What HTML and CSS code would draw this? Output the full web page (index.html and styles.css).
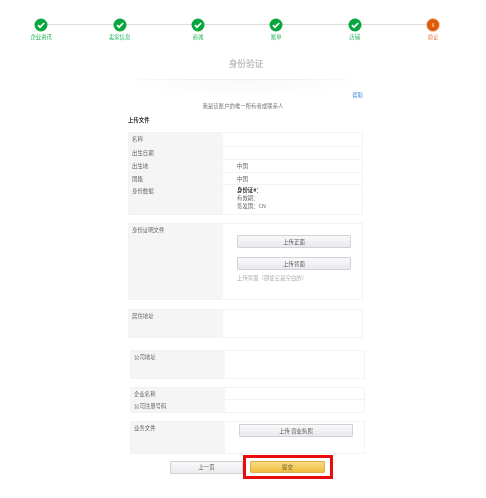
FILE: index.html
```html
<!DOCTYPE html>
<html lang="zh">
<head>
<meta charset="utf-8">
<title>身份验证</title>
<link rel="stylesheet" href="styles.css">
</head>
<body>
<div class="page">
  <ol class="steps">
    <li class="step"><svg class="dot" viewBox="0 0 14 14"><circle cx="7" cy="7" r="6.5" fill="#07a63f"/><path d="M3.9 7.2 6 9.2 10.2 5" fill="none" stroke="#fff" stroke-width="1.7"/></svg><span>企业资讯</span></li>
    <li class="step"><svg class="dot" viewBox="0 0 14 14"><circle cx="7" cy="7" r="6.5" fill="#07a63f"/><path d="M3.9 7.2 6 9.2 10.2 5" fill="none" stroke="#fff" stroke-width="1.7"/></svg><span>卖家信息</span></li>
    <li class="step"><svg class="dot" viewBox="0 0 14 14"><circle cx="7" cy="7" r="6.5" fill="#07a63f"/><path d="M3.9 7.2 6 9.2 10.2 5" fill="none" stroke="#fff" stroke-width="1.7"/></svg><span>商城</span></li>
    <li class="step"><svg class="dot" viewBox="0 0 14 14"><circle cx="7" cy="7" r="6.5" fill="#07a63f"/><path d="M3.9 7.2 6 9.2 10.2 5" fill="none" stroke="#fff" stroke-width="1.7"/></svg><span>账单</span></li>
    <li class="step"><svg class="dot" viewBox="0 0 14 14"><circle cx="7" cy="7" r="6.5" fill="#07a63f"/><path d="M3.9 7.2 6 9.2 10.2 5" fill="none" stroke="#fff" stroke-width="1.7"/></svg><span>店铺</span></li>
    <li class="step current"><span class="num">6</span><span>验证</span></li>
  </ol>

  <h1 class="title">身份验证</h1>
  <div class="rule"></div>
  <a class="help">帮助</a>
  <p class="sub">我是该账户的唯一所有者或联系人</p>
  <h2 class="heading">上传文件</h2>

  <div class="panel p-identity">
    <div class="row h14"><div class="lab">名称</div><div class="val"></div></div>
    <div class="row h13"><div class="lab">出生日期</div><div class="val"></div></div>
    <div class="row h13"><div class="lab">出生地</div><div class="val">中国</div></div>
    <div class="row h13"><div class="lab">国籍</div><div class="val">中国</div></div>
    <div class="row h29"><div class="lab">身份数据</div><div class="val lines"><span class="strong">身份证#：</span><span>有效期：</span><span>签发国：CN</span></div></div>
  </div>

  <div class="panel p-doc">
    <div class="row fill"><div class="lab">身份证明文件</div>
      <div class="val stack">
        <button class="btn">上传正面</button>
        <button class="btn">上传背面</button>
        <span class="note">上传背面（即使它是空白的）</span>
      </div>
    </div>
  </div>

  <div class="panel p-home">
    <div class="row fill"><div class="lab">居住地址</div><div class="val"></div></div>
  </div>

  <div class="panel shift p-co">
    <div class="row fill"><div class="lab">公司地址</div><div class="val"></div></div>
  </div>

  <div class="panel shift p-name">
    <div class="row h13"><div class="lab">企业名称</div><div class="val"></div></div>
    <div class="row h13"><div class="lab">公司注册号码</div><div class="val"></div></div>
  </div>

  <div class="panel shift p-biz">
    <div class="row fill"><div class="lab">业务文件</div>
      <div class="val stack tight"><button class="btn">上传 营业执照</button></div>
    </div>
  </div>

  <div class="actions">
    <button class="btn prev">上一页</button>
    <div class="mark"><button class="btn submit">提交</button></div>
  </div>
</div>
</body>
</html>
```
FILE: styles.css
```css
* { box-sizing: border-box; }
html, body { margin: 0; background: #fff; }
body { font-family: "Noto Sans CJK SC", "Liberation Sans", sans-serif; }
.page {
  width: 486px;
  height: 498px;
  overflow: hidden;
  padding-top: 18px;
  color: #444;
  font-size: 5.4px;
  line-height: 8px;
  filter: blur(0.55px);
}
.steps {
  position: relative;
  list-style: none;
  display: grid;
  grid-template-columns: repeat(6, 78.4px);
  margin: 0 0 0 2px;
  padding: 0;
  height: 27px;
}
.steps::before {
  content: "";
  position: absolute;
  left: 39px;
  width: 392px;
  top: 6px;
  height: 1.4px;
  background: #dcdcdc;
}
.step {
  position: relative;
  display: flex;
  flex-direction: column;
  align-items: center;
  gap: 1px;
  color: #1fb356;
}
.dot { width: 14px; height: 14px; display: block; }
.num {
  width: 14px;
  height: 14px;
  border-radius: 50%;
  background: #dc5a08;
  border: 1px solid #f6c9a8;
  color: #fff;
  font-size: 4.5px;
  line-height: 12px;
  text-align: center;
}
.current { color: #e57a3a; }
.title {
  margin: 12px 0 0;
  padding-left: 6px;
  height: 14px;
  font-size: 8.7px;
  line-height: 14px;
  font-weight: 400;
  text-align: center;
  color: #a4a4a4;
}
.rule {
  width: 240px;
  height: 20px;
  margin: 8px auto 0;
  background: linear-gradient(to right, transparent, #efefef 30%, #efefef 70%, transparent) top / 100% 1px no-repeat,
    radial-gradient(ellipse at top, #f8f8f8, transparent 70%);
}
.help {
  display: block;
  height: 8px;
  margin-top: -8px;
  padding-right: 123px;
  text-align: right;
  color: #4a90d9;
}
.sub {
  margin: 3px 0 0;
  text-align: center;
  color: #777;
}
.heading {
  margin: 6px 0 0 128px;
  font-size: 5.4px;
  line-height: 8px;
  font-weight: 700;
  color: #333;
}
.panel {
  width: 235px;
  margin-left: 128px;
  border: 1px solid #f3f3f3;
  display: flex;
  flex-direction: column;
}
.panel.shift { margin-left: 130px; }
.p-identity { margin-top: 8px; height: 83px; }
.p-doc { margin-top: 8px; height: 77px; }
.p-home { margin-top: 9px; height: 29px; }
.p-co { margin-top: 12px; height: 29px; }
.p-name { margin-top: 8px; height: 26px; }
.p-biz { margin-top: 8px; height: 33px; }
.row {
  display: grid;
  grid-template-columns: 94px 1fr;
  border-bottom: 1px solid #f3f3f3;
}
.row:last-child { border-bottom: 0; }
.h13 { height: 13px; }
.h14 { height: 14px; }
.h29 { height: 29px; }
.fill { flex: 1; }
.lab {
  background: #f5f5f5;
  padding: 2px 0 0 3px;
  color: #666;
}
.val { padding: 2px 0 0 14px; color: #666; }
.lines { display: flex; flex-direction: column; padding-top: 1px; line-height: 8px; }
.strong { color: #333; font-weight: 700; }
.stack {
  display: flex;
  flex-direction: column;
  align-items: flex-start;
  gap: 9px;
  padding-top: 11px;
}
.stack.tight { padding-top: 2px; }
.btn {
  display: block;
  width: 114px;
  height: 13px;
  padding: 0;
  border: 1px solid #cfd2d7;
  border-radius: 1px;
  background: linear-gradient(#f9f9fa, #e9eaed);
  font: inherit;
  color: #555;
  text-align: center;
}
.note { margin-top: -5px; color: #aaa; }
.actions {
  display: flex;
  align-items: center;
  margin: 1px 0 0 170px;
}
.prev { width: 73px; }
.mark {
  border: 3px solid #e80c0c;
  width: 90px;
  height: 24px;
  padding: 3px 0 0 4px;
}
.submit {
  width: 75px;
  height: 12px;
  border-color: #dcb04a;
  background: linear-gradient(#f9dc83, #eebc3e);
  color: #6a5a30;
}
```
